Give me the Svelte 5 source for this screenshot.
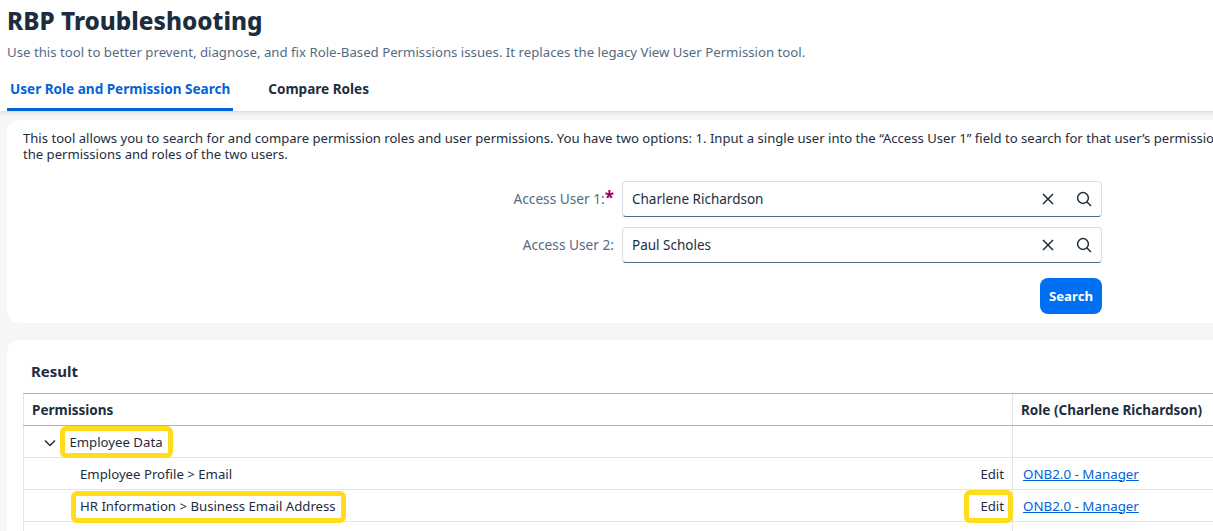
<script lang="ts">
	const users = [
		{ label: 'Access User 1:', value: 'Charlene Richardson', required: true },
		{ label: 'Access User 2:', value: 'Paul Scholes', required: false }
	];
	const rows = [
		{ name: 'Employee Profile > Email', marked: false },
		{ name: 'HR Information > Business Email Address', marked: true }
	];
</script>

<div class="page">
	<header class="head">
		<h1>RBP Troubleshooting</h1>
		<p class="sub">Use this tool to better prevent, diagnose, and fix Role-Based Permissions issues. It replaces the legacy View User Permission tool.</p>
		<nav class="tabs">
			<span class="tab active">User Role and Permission Search</span>
			<span class="tab">Compare Roles</span>
		</nav>
	</header>

	<section class="card search-card">
		<p class="intro">This tool allows you to search for and compare permission roles and user permissions. You have two options: 1. Input a single user into the “Access User 1” field to search for that user’s permissions and roles. 2. Input two users to compare<br />the permissions and roles of the two users.</p>
		<div class="form">
			{#each users as user}
				<div class="field">
					<label>{user.label}{#if user.required}<span class="req">*</span>{/if}</label>
					<div class="input">
						<span class="value">{user.value}</span>
						<svg class="icon" viewBox="0 0 16 16" width="16" height="16"><path d="M3 3l10 10M13 3L3 13" /></svg>
						<svg class="icon" viewBox="0 0 16 16" width="16" height="16"><circle cx="7" cy="7" r="5.4" /><path d="M10.8 10.8L15 15" /></svg>
					</div>
				</div>
			{/each}
			<button class="search">Search</button>
		</div>
	</section>

	<section class="card result-card">
		<h2>Result</h2>
		<table>
			<thead>
				<tr>
					<th class="perm">Permissions</th>
					<th>Role (Charlene Richardson)</th>
				</tr>
			</thead>
			<tbody>
				<tr>
					<td class="group">
						<svg class="chevron" viewBox="0 0 12 8" width="12" height="8"><path d="M1 1.5l5 5 5-5" /></svg>
						<span class="mark">Employee Data</span>
					</td>
					<td></td>
				</tr>
				{#each rows as row}
					<tr>
						<td class="item">
							<span class:mark={row.marked}>{row.name}</span>
							<span class="edit" class:mark-edit={row.marked}>Edit</span>
						</td>
						<td class="role"><a href="#role">ONB2.0 - Manager</a></td>
					</tr>
				{/each}
				<tr class="last"><td></td><td></td></tr>
			</tbody>
		</table>
	</section>
</div>

<style>
	:global(body) {
		margin: 0;
		overflow: hidden;
		background: #f5f6f7;
	}
	.page {
		width: 1600px;
		height: 531px;
		overflow: hidden;
		font-family: 'Noto Sans', sans-serif;
		font-size: 13.2px;
		color: #1d2d3e;
	}
	.head {
		background: #fff;
		height: 111px;
		padding-left: 7px;
		box-sizing: border-box;
		box-shadow: 0 1px 4px rgba(29, 45, 62, 0.18);
	}
	h1 {
		margin: 0;
		padding-top: 5px;
		font-size: 24.3px;
		line-height: 32px;
		font-weight: 800;
	}
	.sub {
		margin: 0;
		padding-top: 6px;
		line-height: 18px;
		font-size: 13.22px;
		color: #556b82;
	}
	.tabs {
		display: flex;
		gap: 32px;
		margin-top: 15px;
	}
	.tab {
		padding: 0 3px;
		height: 35px;
		line-height: 26px;
		font-size: 13.55px;
		font-weight: 700;
		box-sizing: border-box;
	}
	.tab.active {
		color: #0064d9;
		border-bottom: 3px solid #0064d9;
	}
	.card {
		background: #fff;
		margin-left: 7px;
		border-radius: 12px;
		box-sizing: border-box;
	}
	.search-card {
		margin-top: 9px;
		height: 203px;
		padding: 10px 16px;
	}
	.intro {
		margin: 0;
		line-height: 16px;
		font-size: 13.1px;
	}
	.form {
		display: flex;
		flex-direction: column;
		align-items: flex-end;
		gap: 10px;
		width: 1079px;
		margin-top: 19px;
	}
	.field {
		display: flex;
		align-items: center;
		gap: 8px;
	}
	label {
		color: #556b82;
		font-size: 13.7px;
		line-height: 18px;
	}
	.req {
		font-weight: 700;
		font-size: 17px;
		line-height: 0;
		color: #a0006e;
	}
	.input {
		display: flex;
		align-items: center;
		gap: 20px;
		width: 480px;
		height: 36px;
		padding: 0 9px;
		box-sizing: border-box;
		border: 1px solid #d9dde3;
		border-bottom: 1px solid #556b81;
		border-radius: 4px;
		font-size: 13.5px;
	}
	.value {
		flex: 1;
	}
	.icon {
		fill: none;
		stroke: #1d2d3e;
		stroke-width: 1.5;
	}
	.search {
		margin-top: 5px;
		width: 62px;
		height: 36px;
		border: none;
		border-radius: 8px;
		background: #0070f2;
		color: #fff;
		font: inherit;
		font-weight: 700;
	}
	.result-card {
		margin-top: 17px;
		height: 300px;
		padding: 20px 16px;
	}
	h2 {
		margin: 0;
		padding-left: 8px;
		font-size: 15px;
		line-height: 22px;
		font-weight: 700;
	}
	table {
		margin-top: 11px;
		width: 1400px;
		table-layout: fixed;
		border-collapse: collapse;
		font-size: 13.2px;
	}
	th {
		height: 32px;
		padding: 0 8px;
		text-align: left;
		font-size: 13.5px;
		font-weight: 700;
		border-top: 1px solid #a8b2bd;
		border-bottom: 1px solid #a8b2bd;
		border-left: 1px solid #e5e5e5;
		box-sizing: border-box;
	}
	.perm {
		width: 989px;
	}
	td {
		height: 32px;
		padding: 0 8px;
		border-bottom: 1px solid #e5e5e5;
		border-left: 1px solid #e5e5e5;
		box-sizing: border-box;
	}
	.group {
		padding-left: 20px;
	}
	.chevron {
		fill: none;
		stroke: #1d2d3e;
		stroke-width: 1.5;
		margin-right: 10px;
	}
	.item {
		padding-left: 56px;
	}
	.item > span:first-child {
		display: inline-block;
	}
	.edit {
		float: right;
	}
	.role {
		padding-left: 10px;
	}
	.role a {
		font-size: 13.35px;
	}
	.mark, .mark-edit {
		position: relative;
	}
	.mark::after, .mark-edit::after {
		content: '';
		position: absolute;
		inset: -7px -10px -7px -9px;
		border: 5px solid #ffdd1a;
		border-radius: 6px;
	}
	.item .mark::after {
		inset: -6px -10px -8px -9px;
	}
	.mark-edit::after {
		inset: -7px -9px -8px -16px;
	}
	.last td {
		border-bottom: none;
	}
	a {
		color: #0064d9;
	}
</style>
